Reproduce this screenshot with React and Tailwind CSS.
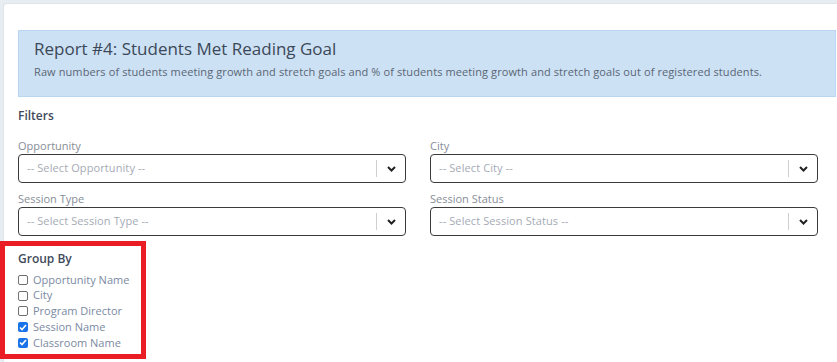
const groupBy = [
  { label: "Opportunity Name", checked: false },
  { label: "City", checked: false },
  { label: "Program Director", checked: false },
  { label: "Session Name", checked: true },
  { label: "Classroom Name", checked: true },
];

const Select = ({ label, placeholder }) => (
  <div>
    <div className="text-[11px] leading-[16px] text-[#878d97]">{label}</div>
    <div className="flex items-center h-[29px] border border-[#3b3b3b] rounded-[4px] bg-white pl-[8px]">
      <span className="flex-1 text-[11px] tracking-[0.1px] text-[#a5abb5]">{placeholder}</span>
      <span className="w-px h-[17px] bg-[#cfcfcf]" />
      <span className="w-[28px] flex justify-center">
        <svg width="9" height="6" viewBox="0 0 9 6" fill="none">
          <path d="M1 1l3.5 3.5L8 1" stroke="#222" strokeWidth="2" />
        </svg>
      </span>
    </div>
  </div>
);

const Checkbox = ({ checked }) =>
  checked ? (
    <span className="w-[10px] h-[10px] rounded-[2px] bg-[#1a73e8] flex items-center justify-center">
      <svg width="8" height="7" viewBox="0 0 8 7" fill="none">
        <path d="M1 3.5l2 2L7 1" stroke="#fff" strokeWidth="1.6" />
      </svg>
    </span>
  ) : (
    <span className="w-[10px] h-[10px] rounded-[2px] border border-[#6f6f6f] bg-white" />
  );

export default function App() {
  return (
    <div
      className="relative w-[837px] h-[362px] overflow-hidden bg-[#e8edf2] pt-[3px] pl-[3px]"
      style={{ fontFamily: '"Open Sans", "Liberation Sans", sans-serif' }}
    >
      <div className="w-[847px] h-[400px] bg-white border-l border-t border-[#dde3ea] rounded-tl-[4px] px-[14px] pt-[26px]">
        {/* Report header */}
        <div className="bg-[#cce1f4] border border-[#b9d7f3] pl-[15px] pt-[6px] pb-[16px]">
          <h1 className="text-[17px] leading-[24px] font-medium text-[#3c4858]">
            Report #4: Students Met Reading Goal
          </h1>
          <p className="mt-[3px] text-[11px] tracking-[0.1px] leading-[16px] text-[#5b6675]">
            Raw numbers of students meeting growth and stretch goals and % of students meeting growth and stretch goals out of registered students.
          </p>
        </div>

        {/* Filters */}
        <div className="mt-[11px] text-[12px] leading-[16px] font-semibold text-[#3f4b5c]">Filters</div>
        <div className="mt-[14px] grid grid-cols-[388px_388px] gap-x-[24px] gap-y-[8px]">
          <Select label="Opportunity" placeholder="-- Select Opportunity --" />
          <Select label="City" placeholder="-- Select City --" />
          <Select label="Session Type" placeholder="-- Select Session Type --" />
          <Select label="Session Status" placeholder="-- Select Session Status --" />
        </div>

        {/* Group by */}
        <div className="mt-[15px] text-[12px] leading-[16px] font-semibold text-[#3f4b5c]">Group By</div>
        <div className="mt-[5px]">
          {groupBy.map((item) => (
            <div key={item.label} className="flex items-center gap-[5px] h-[15.75px]">
              <Checkbox checked={item.checked} />
              <span className="text-[11px] text-[#7b8aa2]">{item.label}</span>
            </div>
          ))}
        </div>
      </div>

      {/* Highlight annotation */}
      <div className="absolute left-0 top-[241px] w-[146px] h-[118px] border-[5px] border-[#ea1c24]" />
    </div>
  );
}
